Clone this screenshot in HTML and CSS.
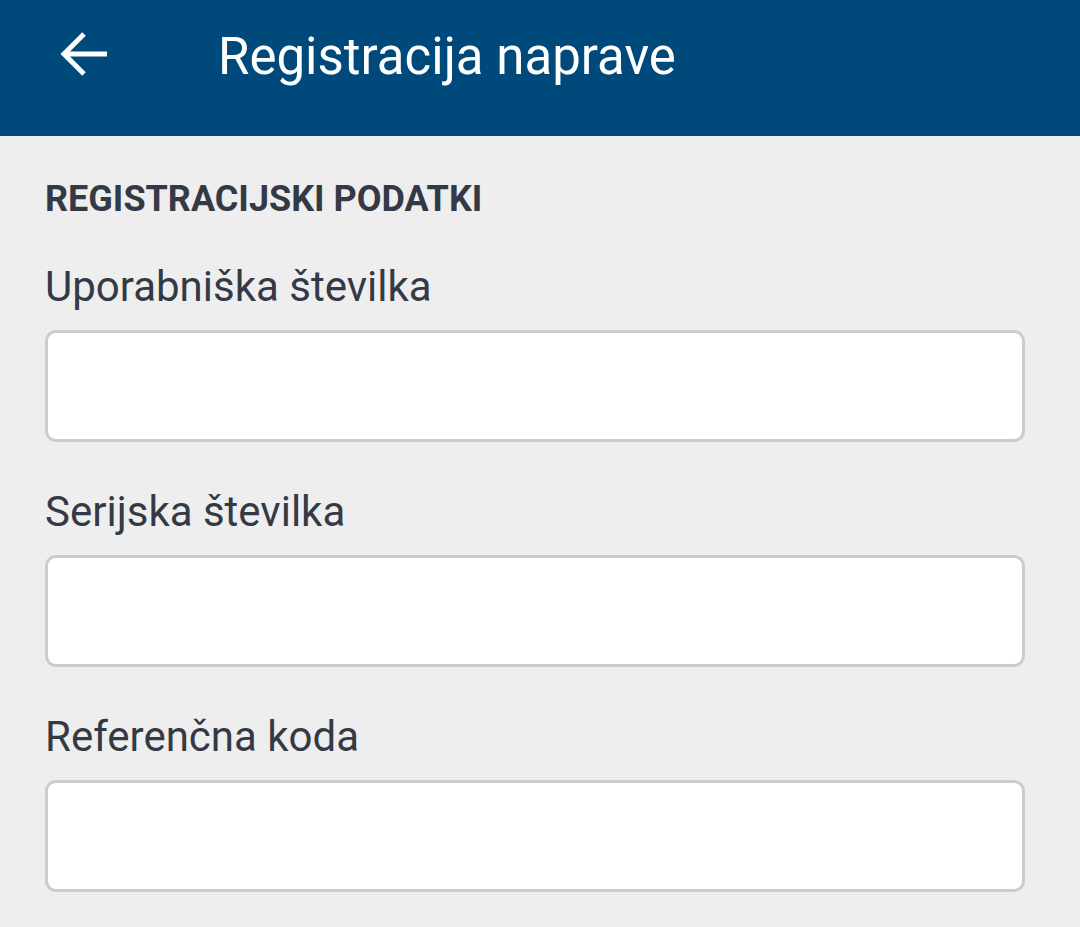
FILE: index.html
```html
<!DOCTYPE html>
<html>
<head>
<meta charset="utf-8">
<link rel="stylesheet" href="styles.css">
</head>
<body>
<header class="appbar">
  <button class="back" aria-label="Nazaj">
    <svg width="50" height="48" viewBox="0 0 50 48"><path d="M48 24H6M25 4L5 24l20 20" fill="none" stroke="#fff" stroke-width="5" stroke-linecap="butt" stroke-linejoin="miter"/></svg>
  </button>
  <h1 class="title">Registracija naprave</h1>
</header>
<main class="content">
  <h2 class="section">REGISTRACIJSKI PODATKI</h2>
  <div class="field">
    <label class="label">Uporabniška številka</label>
    <div class="input"></div>
  </div>
  <div class="field">
    <label class="label">Serijska številka</label>
    <div class="input"></div>
  </div>
  <div class="field">
    <label class="label">Referenčna koda</label>
    <div class="input"></div>
  </div>
</main>
</body>
</html>
```
FILE: styles.css
```css
html, body {
  margin: 0;
  padding: 0;
  background: #eeeeee;
  font-family: Roboto, "Noto Sans", sans-serif;
}
.appbar {
  height: 136px;
  background: #004a7b;
  display: flex;
  align-items: flex-start;
  padding-top: 30px;
  box-sizing: border-box;
}
.back {
  background: none;
  border: 0;
  padding: 0;
  margin-left: 59px;
  width: 50px;
  height: 48px;
  display: flex;
}
.title {
  margin: 3px 0 0 109px;
  color: #fff;
  font-weight: 400;
  font-size: 51px;
  line-height: 48px;
}
.content {
  padding: 0 55px 0 45px;
  display: flex;
  flex-direction: column;
}
.section {
  margin: 41px 0 0 0;
  font-size: 36px;
  line-height: 44px;
  font-weight: 700;
  color: #343a45;
}
.field {
  display: flex;
  flex-direction: column;
}
.label {
  margin-top: 41px;
  font-size: 42px;
  line-height: 50px;
  color: #343a45;
}
.input {
  margin-top: 18px;
  height: 106px;
  background: #fff;
  border: 3px solid #cccccc;
  border-radius: 11px;
}
.field + .field .label { margin-top: 45px; }
```
